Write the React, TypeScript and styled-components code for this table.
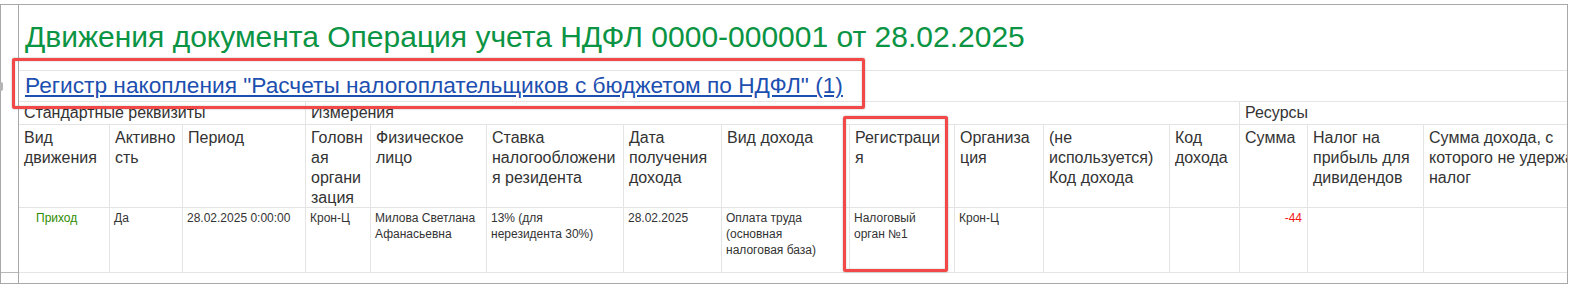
import styled, { createGlobalStyle } from 'styled-components';

const GlobalStyle = createGlobalStyle`
  html, body {
    margin: 0;
    padding: 0;
    background: #fff;
  }
  body {
    font-family: 'Liberation Sans', Arial, sans-serif;
    color: #333;
  }
`;

const Page = styled.div`
  position: relative;
  width: 1569px;
  height: 285px;
  padding-top: 4px;
  box-sizing: border-box;
  overflow: hidden;
`;

const Frame = styled.div`
  width: 1568px;
  height: 280px;
  box-sizing: border-box;
  border: 1px solid #a8a8a8;
  display: grid;
  grid-template-columns: 18px 1fr;
  overflow: hidden;
`;

const Gutter = styled.div`
  border-right: 1px solid #a8a8a8;
  .mark {
    height: 268px;
    box-sizing: border-box;
    border-bottom: 1px solid #b8b8b8;
  }
`;

const Main = styled.div`
  min-width: 0;
  overflow: hidden;
`;

const Title = styled.div`
  height: 66px;
  box-sizing: border-box;
  padding: 15px 0 0 6px;
  border-bottom: 1px solid #e4e4e4;
  font-size: 30px;
  line-height: 34px;
  color: #0b9444;
  white-space: nowrap;
`;

const LinkRow = styled.div`
  height: 31px;
  box-sizing: border-box;
  padding: 1px 0 0 6px;
  border-bottom: 1px solid #e4e4e4;
  font-size: 22.7px;
  line-height: 26px;
  white-space: nowrap;
  a {
    color: #1d4fb0;
    text-decoration: underline;
    text-underline-offset: 2px;
  }
`;

const Grid = styled.div`
  display: grid;
  grid-template-columns: 91px 73px 123px 65px 116px 137px 98px 128px 105px 89px 126px 70px 68px 116px 190px;
`;

const GroupCell = styled.div<{ $span: number }>`
  grid-column: span ${p => p.$span};
  height: 23px;
  box-sizing: border-box;
  padding: 1px 0 0 5px;
  border-right: 1px solid #e4e4e4;
  border-bottom: 1px solid #e4e4e4;
  font-size: 16px;
  line-height: 20px;
  white-space: nowrap;
  overflow: hidden;
`;

const HeadCell = styled.div`
  height: 83px;
  box-sizing: border-box;
  padding: 3px 0 0 5px;
  border-right: 1px solid #e4e4e4;
  border-bottom: 1px solid #e4e4e4;
  font-size: 16px;
  line-height: 20px;
  overflow: hidden;
`;

const DataCell = styled.div<{ $align?: 'left' | 'right'; $indent?: number; $tone?: 'plain' | 'green' | 'red' }>`
  height: 65px;
  box-sizing: border-box;
  padding: 2px 5px 0 ${p => p.$indent ?? 4}px;
  border-right: 1px solid #e4e4e4;
  border-bottom: 1px solid #e4e4e4;
  font-size: 12px;
  line-height: 16px;
  text-align: ${p => p.$align ?? 'left'};
  color: ${p => (p.$tone === 'green' ? '#2e8c00' : p.$tone === 'red' ? '#f21818' : '#333')};
  overflow: hidden;
`;

const Line = styled.span`
  display: block;
  white-space: nowrap;
`;

const Highlight = styled.div<{ $x: number; $y: number; $w: number; $h: number }>`
  position: absolute;
  left: ${p => p.$x}px;
  top: ${p => p.$y}px;
  width: ${p => p.$w}px;
  height: ${p => p.$h}px;
  box-sizing: border-box;
  border: 3px solid #f24848;
  border-radius: 2px;
  box-shadow: 0 0 2px rgba(0, 0, 0, 0.35), inset 0 0 2px rgba(0, 0, 0, 0.25);
  pointer-events: none;
`;

const SplitterTab = styled.div`
  position: absolute;
  left: 0;
  top: 82px;
  width: 3px;
  height: 9px;
  border-radius: 0 2px 2px 0;
  background: #b4b4b4;
`;

type Cell = {
  lines: string[];
  align?: 'left' | 'right';
  indent?: number;
  tone?: 'plain' | 'green' | 'red';
};

// переносы как в исходной форме 1С
const headers: string[][] = [
  ['Вид', 'движения'],
  ['Активно', 'сть'],
  ['Период'],
  ['Головн', 'ая', 'органи', 'зация'],
  ['Физическое', 'лицо'],
  ['Ставка', 'налогообложени', 'я резидента'],
  ['Дата', 'получения', 'дохода'],
  ['Вид дохода'],
  ['Регистраци', 'я'],
  ['Организа', 'ция'],
  ['(не', 'используется)', 'Код дохода'],
  ['Код', 'дохода'],
  ['Сумма'],
  ['Налог на', 'прибыль для', 'дивидендов'],
  ['Сумма дохода, с', 'которого не удержан', 'налог'],
];

const row: Cell[] = [
  { lines: ['Приход'], indent: 17, tone: 'green' },
  { lines: ['Да'] },
  { lines: ['28.02.2025 0:00:00'] },
  { lines: ['Крон-Ц'] },
  { lines: ['Милова Светлана', 'Афанасьевна'] },
  { lines: ['13% (для', 'нерезидента 30%)'] },
  { lines: ['28.02.2025'] },
  { lines: ['Оплата труда', '(основная', 'налоговая база)'] },
  { lines: ['Налоговый', 'орган №1'] },
  { lines: ['Крон-Ц'] },
  { lines: [] },
  { lines: [] },
  { lines: ['-44'], align: 'right', tone: 'red' },
  { lines: [] },
  { lines: [] },
];

function App() {
  return (
    <>
      <GlobalStyle />
      <Page>
        <Frame>
          <Gutter>
            <div className="mark" />
          </Gutter>
          <Main>
            <Title>Движения документа Операция учета НДФЛ 0000-000001 от 28.02.2025</Title>
            <LinkRow>
              <a>Регистр накопления "Расчеты налогоплательщиков с бюджетом по НДФЛ" (1)</a>
            </LinkRow>
            <Grid>
              <GroupCell $span={3}>Стандартные реквизиты</GroupCell>
              <GroupCell $span={9}>Измерения</GroupCell>
              <GroupCell $span={3}>Ресурсы</GroupCell>

              {headers.map((h, i) => (
                <HeadCell key={i}>
                  {h.map(l => (
                    <Line key={l}>{l}</Line>
                  ))}
                </HeadCell>
              ))}

              {row.map((c, i) => (
                <DataCell key={i} $align={c.align} $indent={c.indent} $tone={c.tone}>
                  {c.lines.map(l => (
                    <Line key={l}>{l}</Line>
                  ))}
                </DataCell>
              ))}
            </Grid>
          </Main>
        </Frame>
        <SplitterTab />
        <Highlight $x={12} $y={58} $w={853} $h={51} />
        <Highlight $x={843} $y={116} $w={105} $h={156} />
      </Page>
    </>
  );
}

export default App;
